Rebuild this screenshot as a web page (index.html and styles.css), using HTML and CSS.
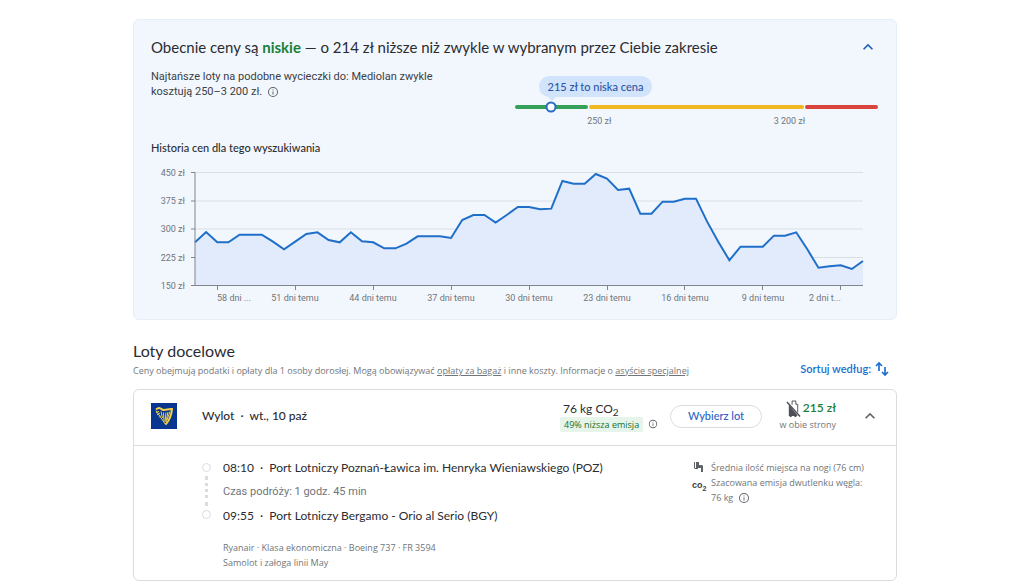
FILE: index.html
```html
<!DOCTYPE html>
<html lang="pl">
<head>
<meta charset="utf-8">
<meta name="viewport" content="width=device-width, initial-scale=1">
<title>Loty</title>
<link rel="stylesheet" href="styles.css">
</head>
<body>
<svg class="defs" aria-hidden="true">
  <symbol id="info" viewBox="0 0 24 24"><path fill="currentColor" d="M11 7h2v2h-2zm0 4h2v6h-2zm1-9a10 10 0 1 0 0 20 10 10 0 0 0 0-20zm0 18a8 8 0 1 1 0-16 8 8 0 0 1 0 16z"/></symbol>
  <symbol id="chevron" viewBox="0 0 24 24"><path fill="currentColor" d="M12 8l-6 6 1.41 1.41L12 10.83l4.59 4.58L18 14z"/></symbol>
</svg>
<main class="page">
  <section class="insights">
    <div class="insights-head">
      <h2 class="insights-title">Obecnie ceny są <strong>niskie</strong> — o 214 zł niższe niż zwykle w wybranym przez Ciebie zakresie</h2>
      <button class="icon-button blue" type="button" aria-label="Zwiń"><svg class="chevron"><use href="#chevron"/></svg></button>
    </div>
    <div class="summary">
      <p class="summary-text">Najtańsze loty na podobne wycieczki do: Mediolan zwykle kosztują 250–3 200 zł. <svg class="info"><use href="#info"/></svg></p>
      <div class="range">
        <div class="range-bar">
          <span class="low"><span class="tip">215 zł to niska cena</span><span class="marker"></span></span>
          <span class="typical"></span>
          <span class="high"></span>
        </div>
        <div class="range-labels"><span>250 zł</span><span>3 200 zł</span></div>
      </div>
    </div>
    <h3 class="history-title">Historia cen dla tego wyszukiwania</h3>
    <svg class="chart" viewBox="-1 0 727 140" role="img" aria-label="Historia cen">
      <path class="grid" d="M43 6.500H711M43 35H711M43 63H711M43 91.500H711"/>
      <g transform="translate(43 -6) scale(11.133 .3333)">
        <path class="area" d="M0 376V247L1 216 2 247 3 247 4 224 5 224 6 224 7 245 8 268 9 245 10 222 11 217 12 240 13 247 14 217 15 244 16 247 17 265 18 265 19 251 20 229 21 229 22 229 23 234 24 180 25 165 26 165 27 188 28 165 29 141 30 141 31 148 32 146 33 63 34 71 35 71 36 42 37 56 38 90 39 86 40 161 41 161 42 125 43 125 44 116 45 116 46 185 47 245 48 301 49 260 50 260 51 260 52 227 53 227 54 217 55 268 56 323 57 319 58 316 59 327 60 303V376Z"/>
        <path class="line" d="M0 247L1 216 2 247 3 247 4 224 5 224 6 224 7 245 8 268 9 245 10 222 11 217 12 240 13 247 14 217 15 244 16 247 17 265 18 265 19 251 20 229 21 229 22 229 23 234 24 180 25 165 26 165 27 188 28 165 29 141 30 141 31 148 32 146 33 63 34 71 35 71 36 42 37 56 38 90 39 86 40 161 41 161 42 125 43 125 44 116 45 116 46 185 47 245 48 301 49 260 50 260 51 260 52 227 53 227 54 217 55 268 56 323 57 319 58 316 59 327 60 303"/>
      </g>
      <path class="axis" d="M39 6.500H43V119.500H39M39 35H43M39 63H43M39 91.500H43M43 119.500H711M65.500 119V124M143.500 119V124M221.500 119V124M299.500 119V124M377.500 119V124M455.500 119V124M532.500 119V124M610.500 119V124M688.500 119V124"/>
      <g class="y-labels">
        <text x="33" y="10">450 zł</text><text x="33" y="38">375 zł</text><text x="33" y="66">300 zł</text><text x="33" y="95">225 zł</text><text x="33" y="123">150 zł</text>
      </g>
      <g class="x-labels">
        <text x="82" y="135">58 dni ...</text><text x="143" y="135">51 dni temu</text><text x="221" y="135">44 dni temu</text><text x="299" y="135">37 dni temu</text><text x="377" y="135">30 dni temu</text><text x="455" y="135">23 dni temu</text><text x="533" y="135">16 dni temu</text><text x="611" y="135">9 dni temu</text><text x="673" y="135">2 dni t...</text>
      </g>
    </svg>
  </section>

  <section class="flights">
    <div class="flights-head">
      <div>
        <h2 class="flights-title">Loty docelowe</h2>
        <p class="note">Ceny obejmują podatki i opłaty dla 1 osoby dorosłej. Mogą obowiązywać <a href="#">opłaty za bagaż</a> i inne koszty. Informacje o <a href="#">asyście specjalnej</a></p>
      </div>
      <button class="sort" type="button">Sortuj według:
        <svg viewBox="0 0 24 24"><path d="M7.500 15V3M3 7.500L7.500 3 12 7.500M16.500 9V21M12 16.500L16.500 21 21 16.500"/></svg>
      </button>
    </div>

    <article class="card">
      <header class="card-head">
        <svg class="logo" viewBox="0 0 26 26" role="img" aria-label="Ryanair">
          <path fill="#073590" d="M0 0h26v26H0z"/>
          <path class="harp" d="M5 6.500C8 4 9 5 11 6.500C14 8 17 5.500 21 6C20.500 12 19 17 14.500 21.500"/>
          <path class="strings" d="M5 7.500L14.500 21.500M5 9.500L8 8.500M6 12L9 10M8 14.500L10 12.500M10 8.500L11.500 15M12.500 9.500L13 18M15 9.500L14 19M17 9L15 19M19 8.500L16 17"/>
        </svg>
        <h3 class="route">Wylot&nbsp; ·&nbsp; wt., 10 paź</h3>
        <div class="emissions">
          <div class="co2">76 kg CO<sub>2</sub></div>
          <div class="badge-row"><span class="badge">49% niższa emisja</span><svg class="info small"><use href="#info"/></svg></div>
        </div>
        <button class="select" type="button">Wybierz lot</button>
        <div class="price">
          <div class="amount"><svg viewBox="0 0 16 18"><path fill="#4d5156" d="M3 5l9 11v1h-1v1H9v-1H6v1H4v-1H3z"/><path d="M6.500 5V1h4v3.500H12.500V13" fill="none" stroke="#4d5156"/><path d="M1 2L15 17.500" stroke="#4d5156" stroke-width="1.500"/></svg><span>215 zł</span></div>
          <div class="trip">w obie strony</div>
        </div>
        <button class="icon-button" type="button" aria-label="Zwiń szczegóły"><svg class="chevron"><use href="#chevron"/></svg></button>
      </header>
      <div class="details">
        <div class="rail"><i class="stop"></i><i class="dots"></i><i class="stop"></i></div>
        <div class="legs">
          <p class="leg">08:10&nbsp; ·&nbsp; Port Lotniczy Poznań-Ławica im. Henryka Wieniawskiego (POZ)</p>
          <p class="duration">Czas podróży: 1 godz. 45 min</p>
          <p class="leg">09:55&nbsp; ·&nbsp; Port Lotniczy Bergamo - Orio al Serio (BGY)</p>
          <p class="meta">Ryanair&nbsp;·&nbsp;Klasa ekonomiczna&nbsp;·&nbsp;Boeing 737&nbsp;·&nbsp;FR 3594<br>Samolot i załoga linii May</p>
        </div>
        <ul class="amenities">
          <li><svg class="seat" viewBox="0 0 12 12"><path fill="#5f6368" d="M2 1h1v6h3v1H3L2 7zM4 1h3v3h3l1 1v6H9V7H4z"/></svg><span>Średnia ilość miejsca na nogi (76 cm)</span></li>
          <li><b class="co2-icon" aria-hidden="true">co<sub>2</sub></b><span>Szacowana emisja dwutlenku węgla: 76&nbsp;kg&nbsp;<svg class="info"><use href="#info"/></svg></span></li>
        </ul>
      </div>
    </article>
  </section>
</main>
</body>
</html>
```
FILE: styles.css
```css
* { box-sizing: border-box; }
body { margin: 0; background: #fff; color: #2b2c30; font: 12px/16px Roboto, sans-serif; }
h2, h3, p, ul { margin: 0; padding: 0; font-weight: 400; }
button { border: 0; background: none; padding: 0; cursor: pointer; }
.defs { position: absolute; width: 0; height: 0; }
.page { padding: 19px 127px 0 133px; }

.insights { background: #f2f7fe; border: 1px solid #e6eef8; border-radius: 6px; padding: 15px 18px 13px 17px; }
.insights-head { display: flex; align-items: center; justify-content: space-between; }
.insights-title { font: 15px/24px Lato, sans-serif; }
.insights-title strong { color: #188038; font-weight: 700; }
.icon-button { display: flex; color: #5f6368; }
.icon-button.blue { color: #1a5fb4; }
.chevron { width: 20px; height: 20px; }
.info { width: 12px; height: 12px; color: #5f6368; vertical-align: -3px; margin-left: 2px; }
.info.small { width: 10px; height: 10px; }
.summary { display: flex; justify-content: space-between; margin-top: 8px; }
.summary-text { width: 40%; padding-top: 2px; color: #3c4043; font-size: 11px; line-height: 15px; }
.range { width: 50%; padding-top: 38px; }
.range-bar { display: flex; gap: 1px; height: 4px; }
.range-bar > span { border-radius: 2px; }
.low { position: relative; flex: 74; background: #34a059; }
.typical { flex: 215; background: #f2b824; }
.high { flex: 73; background: #d9453c; }
.marker { position: absolute; left: 50%; top: 50%; width: 11px; height: 11px; transform: translate(-50%, -50%); border: 2px solid #2a6cc4; border-radius: 50%; background: #fff; }
.tip { position: absolute; left: 24px; bottom: 12px; padding: 0 9px; border-radius: 11px; background: #d2e3fc; color: #2a56a5; font: 500 11px/21px Lato, sans-serif; white-space: nowrap; }
.tip::after { content: ""; position: absolute; left: 9px; top: 100%; border: 4px solid transparent; border-top-color: #d2e3fc; }
.range-labels { display: flex; justify-content: space-between; width: 60%; margin: 5px 0 0 20%; color: #70757a; font-size: 9px; line-height: 14px; }
.history-title { margin-top: 12px; font: 500 11px/16px Lato, sans-serif; }
.chart { display: block; width: 100%; margin-top: 10px; }
.chart text { font: 9px Roboto, sans-serif; fill: #70757a; }
.y-labels { text-anchor: end; }
.x-labels { text-anchor: middle; }
.grid { stroke: #dadfe6; }
.axis { fill: none; stroke: #80868b; }
.area { fill: #e0e9fb; fill-opacity: .9; }
.line { fill: none; stroke: #1f6fc9; stroke-width: 2px; vector-effect: non-scaling-stroke; }

.flights { margin-top: 21px; }
.flights-head { display: flex; justify-content: space-between; align-items: flex-end; padding-right: 7px; }
.flights-title { margin-bottom: 2px; font: 16px/20px Lato, sans-serif; }
.note { color: #70757a; font: 9px/16px "Open Sans", sans-serif; }
.note a { color: inherit; }
.sort { display: flex; align-items: center; gap: 3px; color: #1a6fd0; font: 600 11px/20px Lato, sans-serif; }
.sort svg { width: 16px; height: 16px; fill: none; stroke: currentColor; stroke-width: 2.500; }
.card { margin-top: 10px; border: 1px solid #dadce0; border-radius: 6px; }
.card-head { display: flex; align-items: center; height: 56px; padding: 0 16px 3px 17px; border-bottom: 1px solid #dadce0; }
.logo { width: 26px; height: 26px; }
.harp, .strings { fill: none; stroke: #f1cf4b; stroke-width: 2; }
.strings { stroke-width: 1; }
.route { flex: 1; margin-left: 25px; font: 500 12px/16px Lato, sans-serif; }
.emissions { width: 110px; }
.co2 { padding-left: 3px; font: 12px/16px Lato, sans-serif; }
sub { font-size: 10px; line-height: 0; }
.badge-row { display: flex; align-items: center; justify-content: space-between; padding-right: 12px; white-space: nowrap; }
.badge { padding: 0 4px; background: #e6f4ea; color: #137333; border-radius: 2px; font: 500 9px/15px "Open Sans", sans-serif; }
.select { width: 92px; height: 23px; border: 1px solid #dadce0; border-radius: 12px; color: #2a62c4; font: 500 11px/20px Lato, sans-serif; }
.price { width: 74px; text-align: right; }
.amount { display: flex; align-items: center; justify-content: flex-end; gap: 2px; color: #188038; font: 600 12px/18px Lato, sans-serif; }
.amount svg { width: 15px; height: 17px; }
.trip { color: #70757a; font: 9px/16px "Open Sans", sans-serif; }
.card-head .icon-button { margin-left: 24px; }
.details { display: flex; padding: 14px 18px 10px 67px; }
.rail { display: flex; flex-direction: column; align-items: center; gap: 4px; width: 10px; height: 56px; margin-top: 3px; }
.stop { width: 9px; height: 9px; border: 1px solid #dadce0; border-radius: 50%; }
.dots { flex: 1; border-left: 3px dotted #dadce0; }
.legs { flex: 1; margin-left: 12px; }
.leg { font: 12px/16px Lato, sans-serif; }
.duration { margin: 8px 0; color: #70757a; font-size: 11px; }
.meta { margin-top: 16px; color: #70757a; font: 9px/15px "Open Sans", sans-serif; }
.amenities { width: 186px; list-style: none; color: #70757a; font: 9px/15px "Open Sans", sans-serif; }
.amenities li { display: grid; grid-template-columns: 14px 1fr; gap: 5px; }
.seat { width: 12px; height: 12px; margin-top: 1px; }
.co2-icon { font: 700 9px/20px "Liberation Sans", sans-serif; color: #3c4043; }
.co2-icon sub { font-size: 7px; }
```
